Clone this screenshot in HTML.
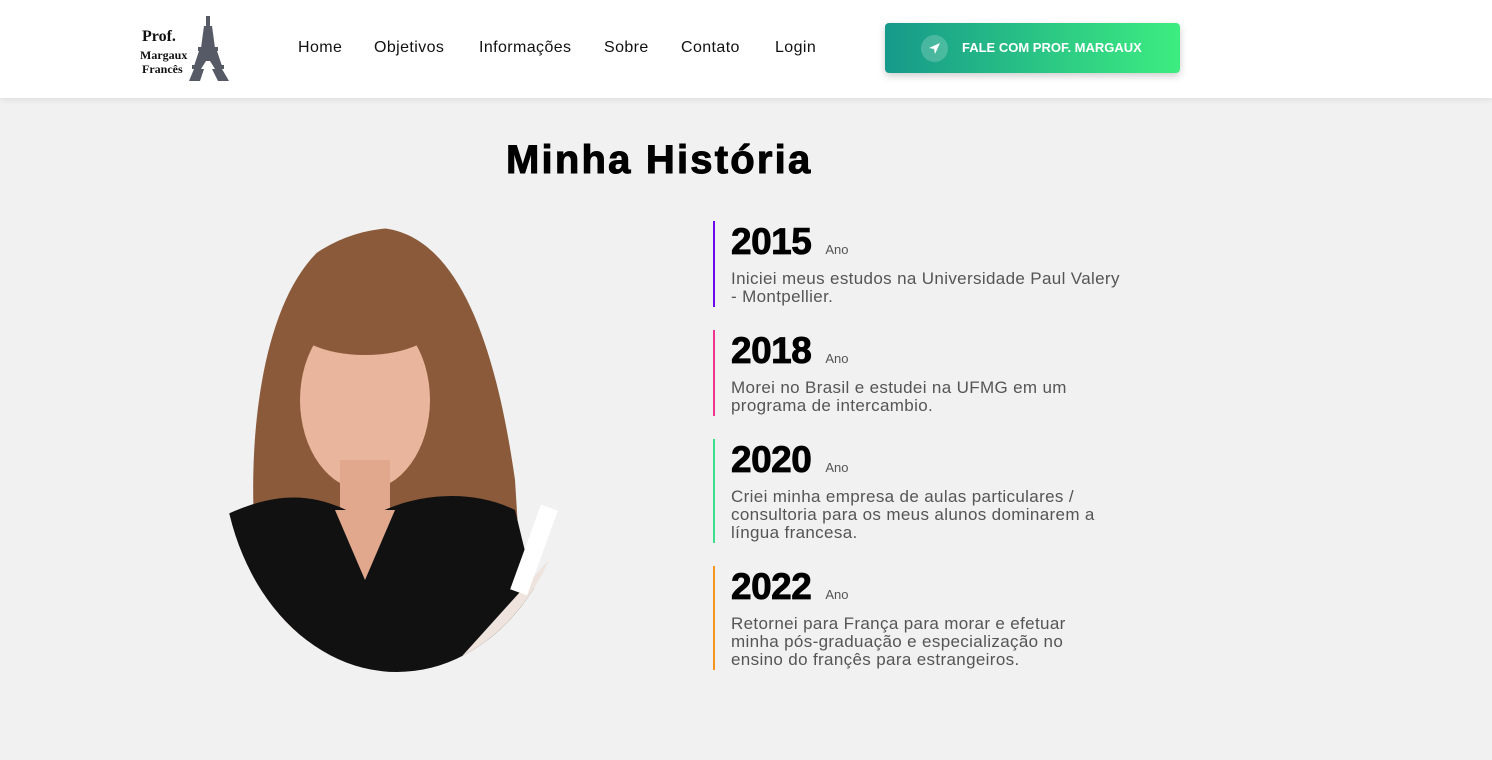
<!DOCTYPE html>
<html><head><meta charset="utf-8"><style>
*{margin:0;padding:0;box-sizing:border-box}
body{width:1492px;height:760px;background:#f1f1f1;font-family:"Liberation Sans",sans-serif;position:relative;overflow:hidden}
header{position:absolute;left:0;top:0;width:1492px;height:98px;background:#fff;box-shadow:0 2px 6px rgba(0,0,0,.08)}
.logo{position:absolute;left:140px;top:14px;width:95px;height:70px}
.logo .t{position:absolute;font-family:"Liberation Serif",serif;font-weight:bold;color:#111}
nav a{position:absolute;top:39px;font-size:16px;color:#111;text-decoration:none;letter-spacing:.4px}
.btn{position:absolute;left:885px;top:23px;width:295px;height:50px;border-radius:4px;background:linear-gradient(90deg,#16998a,#3ded80);box-shadow:0 3px 8px rgba(0,0,0,.2);color:#fff;font-weight:bold;font-size:13px}
.btn .ic{position:absolute;left:36px;top:12px;width:27px;height:27px;border-radius:50%;background:rgba(255,255,255,.2)}
.btn span{position:absolute;left:77px;top:17px}
h1{position:absolute;left:506px;top:138px;font-size:40px;font-weight:900;color:#000;letter-spacing:2.2px;-webkit-text-stroke:1px #000}
.it{position:absolute;left:713px;width:440px;border-left:2px solid;padding-left:16px}
.y{font-size:37px;font-weight:900;color:#000;line-height:40px;margin-top:1px;letter-spacing:-.5px;-webkit-text-stroke:.8px #000}
.y small{font-size:13px;font-weight:normal;color:#555;margin-left:14px;letter-spacing:0;-webkit-text-stroke:0}
.d{font-size:17px;color:#555;line-height:18px;margin-top:0;letter-spacing:.35px}
</style></head><body>
<header>
<div class="logo">
<div class="t" style="left:2px;top:14px;font-size:16px">Prof.</div>
<div class="t" style="left:0;top:34px;font-size:12px">Margaux</div>
<div class="t" style="left:2px;top:48px;font-size:12px">Francês</div>
<svg style="position:absolute;left:48px;top:0" width="42" height="68" viewBox="0 0 42 68"><g fill="#555a66"><rect x="18" y="2" width="4" height="10"/><polygon points="16,12 24,12 27,34 13,34"/><rect x="10" y="33" width="20" height="4"/><polygon points="11,37 29,37 34,52 6,52"/><rect x="4" y="51" width="32" height="4"/><polygon points="6,55 16,55 12,67 1,67"/><polygon points="24,55 34,55 41,67 30,67"/></g><polygon points="13,55 27,55 22,47 18,47" fill="#fff"/></svg>
</div>
<nav><a style="left:298px">Home</a><a style="left:374px">Objetivos</a><a style="left:479px">Informações</a><a style="left:604px">Sobre</a><a style="left:681px">Contato</a><a style="left:775px">Login</a></nav>
<div class="btn"><div class="ic"><svg width="27" height="27" viewBox="0 0 27 27"><path d="M19 8 L8 13 L13 14 L14 19 Z" fill="#fff"/></svg></div><span>FALE COM PROF. MARGAUX</span></div>
</header>
<h1>Minha História</h1>
<svg style="position:absolute;left:215px;top:220px" width="370" height="455" viewBox="0 0 370 455">
<defs><clipPath id="c"><ellipse cx="182" cy="230" rx="175" ry="222"/></clipPath></defs>
<g clip-path="url(#c)">
<rect width="370" height="455" fill="#f1f1f1"/>
<path d="M40 320 C30 180 60 20 150 8 C240 0 280 120 300 260 L310 420 L40 420Z" fill="#8a5a3a"/>
<ellipse cx="150" cy="180" rx="65" ry="90" fill="#e9b59c"/>
<rect x="125" y="240" width="50" height="70" fill="#e2a88e"/>
<path d="M0 300 C60 270 100 270 150 300 C200 270 260 270 300 290 L340 455 L0 455Z" fill="#111"/>
<path d="M120 290 L150 360 L180 290Z" fill="#e2a88e"/>
<path d="M230 455 L370 300 L370 455Z" fill="#eee3dd"/>
<rect x="310" y="285" width="18" height="90" fill="#fff" transform="rotate(20 319 330)"/>
<ellipse cx="150" cy="100" rx="75" ry="35" fill="#8a5a3a"/>
</g>
</svg>
<div class="it" style="top:221px;height:86px;border-color:#6a0af0"><div class="y">2015<small>Ano</small></div><div class="d">Iniciei meus estudos na Universidade Paul Valery<br>- Montpellier.</div></div>
<div class="it" style="top:330px;height:86px;border-color:#f0358f"><div class="y">2018<small>Ano</small></div><div class="d">Morei no Brasil e estudei na UFMG em um<br>programa de intercambio.</div></div>
<div class="it" style="top:439px;height:104px;border-color:#3de08a"><div class="y">2020<small>Ano</small></div><div class="d">Criei minha empresa de aulas particulares /<br>consultoria para os meus alunos dominarem a<br>língua francesa.</div></div>
<div class="it" style="top:566px;height:104px;border-color:#f5941f"><div class="y">2022<small>Ano</small></div><div class="d">Retornei para França para morar e efetuar<br>minha pós-graduação e especialização no<br>ensino do françês para estrangeiros.</div></div>
</body></html>
